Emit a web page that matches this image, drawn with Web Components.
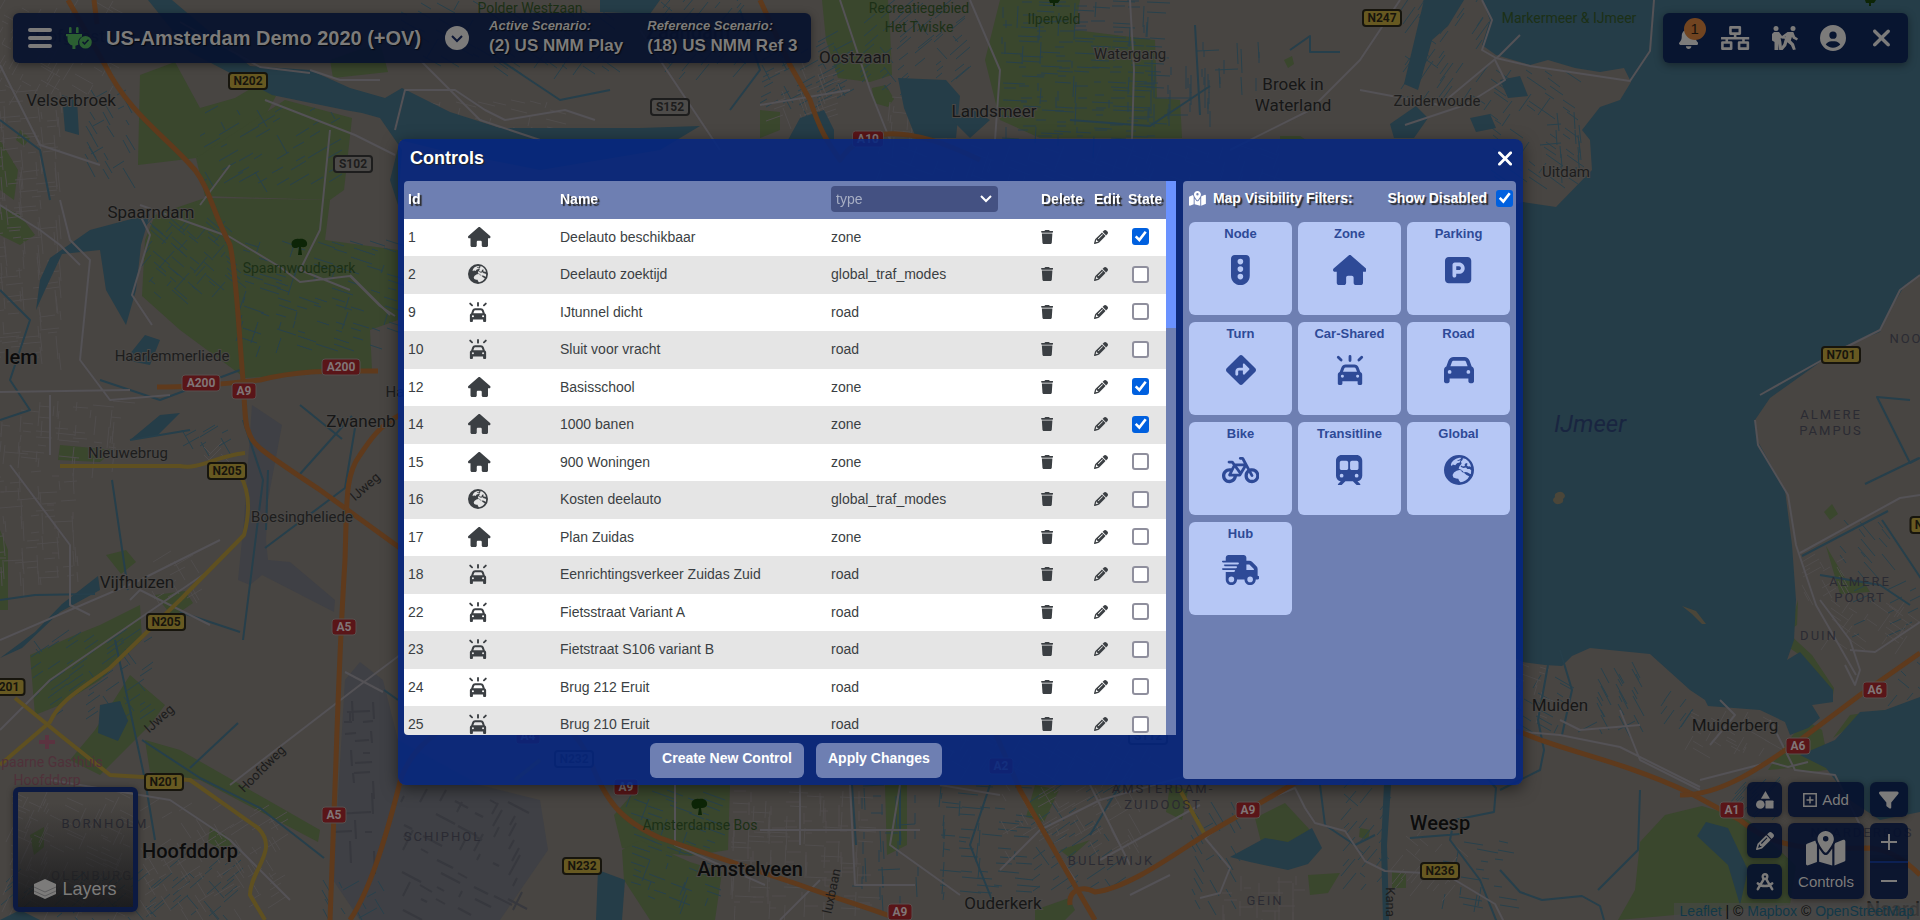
<!DOCTYPE html>
<html lang="en">
<head>
<meta charset="utf-8">
<title>Controls</title>
<style>
html, body {
    margin: 0;
    height: 100%;
    overflow: hidden;
    background: #484542;
    font-family: "Liberation Sans", Arial, sans-serif;
    font-size: 14px;
    --chrome: rgba(5, 17, 46, 0.9);
    --chrome-ink: #7c7b7a;
    --modal: rgba(4, 37, 128, 0.88);
    --panel: #6e7fb2;
    --ink: #3b3f43;
}
</style>
</head>
<body>
<map-app></map-app>

<script>
const ICONS = {
    house: ['0 0 576 512', '<path d="M575.8 255.5c0 18-15 32.1-32 32.1h-32l.7 160.2c0 2.7-.2 5.4-.5 8.1V472c0 22.1-17.9 40-40 40H392c-22.1 0-40-17.9-40-40V384c0-17.7-14.3-32-32-32H256c-17.7 0-32 14.3-32 32v88c0 22.1-17.9 40-40 40H104c-22.1 0-40-17.9-40-40V287.6H32c-18 0-32-14-32-32.1c0-9 3-17 10-24L266.4 8c7-7 15-8 22-8s15 2 21 7L564.8 231.5c8 7 12 15 11 24z"/>'],
    xmark: ['32 86 320 340', '<path d="M342.6 150.6c12.5-12.5 12.5-32.8 0-45.3s-32.8-12.5-45.3 0L192 210.7 86.6 105.4c-12.5-12.5-32.8-12.5-45.3 0s-12.5 32.8 0 45.3L146.7 256 41.4 361.4c-12.5 12.5-12.5 32.8 0 45.3s32.8 12.5 45.3 0L192 301.3 297.4 406.6c12.5 12.5 32.8 12.5 45.3 0s12.5-32.8 0-45.3L237.3 256 342.6 150.6z"/>'],
    bell: ['0 0 448 512', '<path d="M224 0c-17.7 0-32 14.3-32 32V51.2C119 66 64 130.6 64 208v18.8c0 47-17.3 92.4-48.5 127.6l-7.4 8.3c-8.4 9.4-10.4 22.9-5.3 34.4S19.4 416 32 416H416c12.6 0 24-7.4 29.2-18.9s3.1-25-5.3-34.4l-7.4-8.3C401.3 319.2 384 273.9 384 226.8V208c0-77.4-55-142-128-156.8V32c0-17.7-14.3-32-32-32zm45.3 493.3c12-12 18.7-28.3 18.7-45.3H160c0 17 6.7 33.3 18.7 45.3s28.3 18.7 45.3 18.7s33.3-6.7 45.3-18.7z"/>'],
    user: ['0 0 512 512', '<path d="M399 384.2C376.9 345.8 335.4 320 288 320H224c-47.4 0-88.9 25.8-111 64.2c35.2 39.2 86.2 63.8 143 63.8s107.8-24.7 143-63.8zM0 256a256 256 0 1 1 512 0A256 256 0 1 1 0 256zm256 16a72 72 0 1 0 0-144 72 72 0 1 0 0 144z"/>'],
    filter: ['0 20 512 470', '<path d="M3.9 54.9C10.5 40.9 24.5 32 40 32H472c15.5 0 29.5 8.9 36.1 22.9s4.6 30.5-5.2 42.5L320 320.9V448c0 12.1-6.8 23.2-17.7 28.6s-23.8 4.3-33.5-3l-64-48c-8.1-6-12.8-15.5-12.8-25.6V320.9L9 97.3C-.7 85.4-2.8 68.8 3.9 54.9z"/>'],
    car: ['0 0 512 512', '<path d="M135.2 117.4L109.1 192H402.9l-26.1-74.6C372.3 104.6 360.2 96 346.6 96H165.4c-13.6 0-25.7 8.6-30.2 21.4zM39.6 196.8L74.8 96.3C88.3 57.8 124.6 32 165.4 32H346.6c40.8 0 77.1 25.8 90.6 64.3l35.2 100.5c23.2 9.6 39.6 32.5 39.6 59.2V448c0 17.7-14.3 32-32 32H448c-17.7 0-32-14.3-32-32V400H96v48c0 17.7-14.3 32-32 32H32c-17.7 0-32-14.3-32-32V256c0-26.7 16.4-49.6 39.6-59.2zM128 288a32 32 0 1 0 -64 0 32 32 0 1 0 64 0zm288 32a32 32 0 1 0 0-64 32 32 0 1 0 0 64z"/>'],
    parking: ['0 0 448 512', '<path d="M64 32C28.7 32 0 60.7 0 96V416c0 35.3 28.7 64 64 64H384c35.3 0 64-28.7 64-64V96c0-35.3-28.7-64-64-64H64zM192 256h48c17.7 0 32-14.3 32-32s-14.3-32-32-32H192v64zm48 64H192v32c0 17.7-14.3 32-32 32s-32-14.3-32-32V168c0-22.1 17.9-40 40-40h72c53 0 96 43 96 96s-43 96-96 96z"/>'],
    turn: ['0 0 512 512', '<path d="M227.7 11.7c15.6-15.6 40.9-15.6 56.6 0l216 216c15.6 15.6 15.6 40.9 0 56.6l-216 216c-15.6 15.6-40.9 15.6-56.6 0l-216-216c-15.6-15.6-15.6-40.9 0-56.6l216-216zm87.6 137c-4.6-4.6-11.5-5.9-17.4-3.5s-9.9 8.3-9.9 14.8v56H224c-35.3 0-64 28.7-64 64v48c0 13.3 10.7 24 24 24s24-10.7 24-24V280c0-8.8 7.2-16 16-16h64v56c0 6.5 3.9 12.3 9.9 14.8s12.9 1.1 17.4-3.5l80-80c6.2-6.2 6.2-16.4 0-22.6l-80-80z"/>'],
    bike: ['0 0 640 512', '<path d="M312 32c-13.3 0-24 10.7-24 24s10.7 24 24 24h25.7l34.6 64H222.9l-27.4-38C191 99.7 183.7 96 176 96H120c-13.3 0-24 10.7-24 24s10.7 24 24 24h43.7l22.1 30.7-26.6 53.1c-10-2.5-20.5-3.8-31.2-3.8C57.3 224 0 281.3 0 352s57.3 128 128 128c65.3 0 119.1-48.9 127-112h49c8.5 0 16.3-4.5 20.7-11.8l84.8-143.5 21.7 40.1C402.4 276.3 384 312 384 352c0 70.7 57.3 128 128 128s128-57.3 128-128s-57.3-128-128-128c-13.5 0-26.5 2.1-38.7 6L375.4 48.8C369.8 38.4 359 32 347.2 32H312zM458.6 303.7l32.3 59.7c6.3 11.7 20.9 16 32.5 9.7s16-20.9 9.7-32.5l-32.3-59.7c3.6-.6 7.4-.9 11.2-.9c39.8 0 72 32.2 72 72s-32.2 72-72 72s-72-32.2-72-72c0-18.6 7-35.5 18.6-48.3zM133.2 368h65c-7.3 32.1-36 56-70.2 56c-39.8 0-72-32.2-72-72s32.2-72 72-72c1.7 0 3.4 .1 5.1 .2l-24.2 48.5c-9 18.1 4.1 39.4 24.3 39.4zm33.7-48l50.7-101.3 72.9 101.2-.1 .1H166.8zm90.6-128H365.9L317 274.8 257.4 192z"/>'],
    train: ['0 0 448 512', '<path fill-rule="evenodd" d="M96 0C43 0 0 43 0 96V352c0 48 35.2 87.7 81.1 94.9l-46 46C28.1 499.9 33.1 512 43 512H82.7c8.5 0 16.6-3.4 22.6-9.4L160 448H288l54.6 54.6c6 6 14.1 9.4 22.6 9.4H405c10 0 15-12.1 7.9-19.1l-46-46c46-7.1 81.1-46.9 81.1-94.9V96c0-53-43-96-96-96H96zM64 128c0-17.7 14.3-32 32-32h80c17.7 0 32 14.3 32 32v96c0 17.7-14.3 32-32 32H96c-17.7 0-32-14.3-32-32V128zM272 96h80c17.7 0 32 14.3 32 32v96c0 17.7-14.3 32-32 32H272c-17.7 0-32-14.3-32-32V128c0-17.7 14.3-32 32-32zM64 352a32 32 0 1 1 64 0 32 32 0 1 1 -64 0zm288-32a32 32 0 1 1 0 64 32 32 0 1 1 0-64z"/>'],
    truck: ['0 0 640 512', '<path d="M112 0C85.5 0 64 21.5 64 48V96H16c-8.8 0-16 7.2-16 16s7.2 16 16 16H272c8.8 0 16 7.2 16 16s-7.2 16-16 16H48c-8.8 0-16 7.2-16 16s7.2 16 16 16H240c8.8 0 16 7.2 16 16s-7.2 16-16 16H16c-8.8 0-16 7.2-16 16s7.2 16 16 16H208c8.8 0 16 7.2 16 16s-7.2 16-16 16H64V416c0 53 43 96 96 96s96-43 96-96H384c0 53 43 96 96 96s96-43 96-96h32c17.7 0 32-14.3 32-32s-14.3-32-32-32V237.3c0-17-6.7-33.3-18.7-45.3L512 114.7c-12-12-28.3-18.7-45.3-18.7H416V48c0-26.5-21.5-48-48-48H112zM544 237.3V256H416V160h50.7L544 237.3zM160 368a48 48 0 1 1 0 96 48 48 0 1 1 0-96zm272 48a48 48 0 1 1 96 0 48 48 0 1 1 -96 0z"/>'],
    light: ['0 0 320 512', '<path fill-rule="evenodd" d="M64 0C28.7 0 0 28.7 0 64V352c0 88.4 71.6 160 160 160s160-71.6 160-160V64c0-35.3-28.7-64-64-64H64zM112 112a48 48 0 1 1 96 0 48 48 0 1 1 -96 0zM112 240a48 48 0 1 1 96 0 48 48 0 1 1 -96 0zM112 368a48 48 0 1 1 96 0 48 48 0 1 1 -96 0z"/>'],
    globe: ['0 0 512 512', '<path fill-rule="evenodd" d="M256 0a256 256 0 1 1 0 512A256 256 0 1 1 256 0zM130 130L160 92 205 66 258 48 298 48 276 72 226 92 236 104 284 90 268 126 222 140 192 176 150 162 134 186 116 170zM322 54L372 70 420 112 448 158 462 206 434 190 410 196 388 176 404 150 378 138 352 158 356 186 322 196 300 178 282 200 330 222 376 214 398 238 440 240 464 262 460 318 448 326 404 300 372 292 336 298 318 270 262 256 216 268 170 298 146 340 160 382 208 402 244 404 258 440 282 464 324 456 366 436 404 404 430 364 384 342 350 310 300 284 304 256 250 234 262 198 300 150 290 112 316 84z"/>'],
    map: ['0 0 576 512', '<path d="M408 120c0 54.6-73.1 151.9-105.2 192c-7.7 9.6-22 9.6-29.6 0C241.1 271.9 168 174.6 168 120C168 53.7 221.7 0 288 0s120 53.7 120 120zm8 80.4c3.5-6.9 6.7-13.8 9.6-20.6c.5-1.2 1-2.5 1.5-3.7l116-46.4C558.9 123.4 576 135 576 152V422.8c0 9.8-6 18.6-15.1 22.3L416 503V200.4zM137.6 138.3c2.4 14.1 7.2 28.3 12.8 41.5c2.9 6.8 6.1 13.7 9.6 20.6V451.8L32.9 502.7C17.1 509 0 497.4 0 480.4V209.6c0-9.8 6-18.6 15.1-22.3l122.6-49zM327.8 332c13.9-17.4 35.7-45.7 56.2-77V504.3L192 449.4V255c20.5 31.3 42.3 59.6 56.2 77c20.5 25.6 59.1 25.6 79.6 0zM288 152a40 40 0 1 0 0-80 40 40 0 1 0 0 80z"/>'],
    trash: ['0 0 448 512', '<path d="M135.2 17.7L128 32H32C14.3 32 0 46.3 0 64S14.3 96 32 96H416c17.7 0 32-14.3 32-32s-14.3-32-32-32H320l-7.2-14.3C307.4 6.8 296.3 0 284.2 0H163.8c-12.1 0-23.2 6.8-28.6 17.7zM416 128H32L53.2 467c1.6 25.3 22.6 45 47.9 45H346.9c25.3 0 46.3-19.7 47.9-45L416 128z"/>'],
    pencil: ['0 0 512 512', '<path d="M410.3 231l11.3-11.3-33.9-33.9-62.1-62.1L291.7 89.8l-11.3 11.3-22.6 22.6L58.6 322.9c-10.4 10.4-18 23.3-22.2 37.4L1 480.7c-2.5 8.4-.2 17.5 6.1 23.7s15.3 8.5 23.7 6.1l120.3-35.4c14.1-4.2 27-11.8 37.4-22.2L387.7 253.7 410.3 231zM160 399.4l-9.1 22.7c-4 3.1-8.5 5.4-13.3 6.9L59.4 452l23-78.1c1.4-4.9 3.8-9.4 6.9-13.3l22.7-9.1v32c0 8.8 7.2 16 16 16h32zM362.7 18.7L348.3 33.2 325.7 55.8 314.3 67.1l33.9 33.9 62.1 62.1 33.9 33.9 11.3-11.3 22.6-22.6 14.5-14.5c25-25 25-65.5 0-90.5L453.3 18.7c-25-25-65.5-25-90.5 0zm-47.4 168l-144 144c-6.2 6.2-16.4 6.2-22.6 0s-6.2-16.4 0-22.6l144-144c6.2-6.2 16.4-6.2 22.6 0s6.2 16.4 0 22.6z"/>'],
    bars: ['0 0 24 20', '<path d="M2 0h20a2 2 0 0 1 0 4H2a2 2 0 0 1 0-4zM2 8h20a2 2 0 0 1 0 4H2a2 2 0 0 1 0-4zM2 16h20a2 2 0 0 1 0 4H2a2 2 0 0 1 0-4z"/>'],
    plug: ['0 0 26 22', '<path d="M3 1.3a1.3 1.3 0 0 1 2.6 0V6H3zM10 1.3a1.3 1.3 0 0 1 2.6 0V6H10zM0 7h16v2.500a7.500 7.500 0 0 0-3.700 8.300l-2.900 1V22H6.400v-3.500C3.500 17.800 1.500 15.500 1.500 12V9.300H0z"/><path fill-rule="evenodd" d="M19.500 9a6.300 6.300 0 1 1 0 12.600 6.300 6.300 0 0 1 0-12.600zM23 13.200l-1-1-3.400 3.600-1.600-1.500-1 1.100 2.600 2.500z"/>'],
    chevronCircle: ['0 0 24 24', '<circle cx="12" cy="12" r="12"/><path d="M7 10l5 5 5-5" fill="none" stroke="#0d1735" stroke-width="2"/>'],
    chevron: ['0 0 12 8', '<path d="M1 1l5 5 5-5" fill="none" stroke="currentColor" stroke-width="2"/>'],
    sitemap: ['0 0 29 23', '<path fill="none" stroke="currentColor" stroke-width="2.500" stroke-linejoin="round" d="M10 1.300h9v6h-9zM2.300 15.800h8.400v5.900H2.300zM18.300 15.800h8.400v5.900h-8.400zM14.500 7.500v4.500M1 11.800h27M6.500 12v4M22.500 12v4"/>'],
    people: ['0 0 26 24', '<circle cx="4" cy="2.500" r="2.500"/><circle cx="21" cy="2.500" r="2.500"/><path d="M2 6h5l3.200 4.200 3.600.4v2.400L8.600 12.200 9.400 16l.8 8H7.200l-.8-6.500V24H2.500V16L0 14.500V8z"/><path d="M15.500 6h5.800l1.800 4.500 2.900 2-1.200 2-4-2.100-.8-1.600-1.200 3.600 3.200 3.400 1.800 5.800-2.800.400-2.100-4.700-3.600-3-1 3.500-4 4.600-2.200-1.600 3.300-4.700 2.300-8-3.200 2.300-1.500-1.600z"/>'],
    shapes: ['0 0 20 20', '<path d="M10.500 0l5 8.500h-10z"/><circle cx="4.800" cy="15" r="4.800"/><rect x="10.500" y="10.500" width="9" height="9" rx="1"/>'],
    compass: ['0 0 20 20', '<path fill="none" stroke="currentColor" stroke-width="2.800" stroke-linecap="round" d="M8.800 6.500L2 18M11.200 6.500L18 18M2 11.500c4 4 12 4 16 0"/><circle cx="10" cy="4" r="2.600" fill="none" stroke="currentColor" stroke-width="2.600"/>'],
    plusSquare: ['0 0 14 14', '<path fill="none" stroke="currentColor" stroke-width="1.500" d="M.8.8h12.400v12.400H.8zM7 3.500v7M3.500 7h7"/>'],
    plus: ['0 0 16 16', '<path d="M7 0h2v7h7v2H9v7H7V9H0V7h7z"/>'],
    minus: ['0 0 16 16', '<path d="M0 7h16v2H0z"/>'],
    layers: ['0 0 22 20', '<path d="M11 0l11 5v10l-11 5L0 15V5z"/><path fill="none" stroke="#24262a" stroke-opacity=".5" stroke-width=".7" d="M0 8l11 5 11-5M0 12l11 5 11-5"/>']
};
// the alerted car is the plain car made smaller, with three rays above it
ICONS.carOn = ['0 0 512 512', `<g transform="translate(48 138) scale(.8125 .78)">${ICONS.car[1]}</g>
    <path fill="none" stroke="currentColor" stroke-width="48" stroke-linecap="round" d="M256 24v70M56 40l48 46M456 40l-48 46"/>`];

class AppIcon extends HTMLElement {
    constructor() {
        super();
        this.attachShadow({mode: 'open'});
    }

    connectedCallback() {
        const [box, body] = ICONS[this.getAttribute('name')];
        this.shadowRoot.innerHTML = `
<style>
:host {
    display: inline-flex;
    flex: none;
    height: 20px;
}

svg {
    display: block;
    height: 100%;
    fill: currentColor;
}
</style>
<svg viewBox="${box}" aria-hidden="true">${body}</svg>`;
    }
}

// ---- basemap ----

const GREENS = [
    'M140 75L175 62 200 108 235 98 262 82 276 96 262 122 196 158 138 165z',
    'M196 158L285 100 352 118 344 190 330 200 205 196z',
    'M155 215L205 198 330 200 325 240 398 250 398 320 370 330 372 370 245 378 180 330 142 296 145 240z',
    'M0 205L20 215 35 235 20 245 0 235zM60 445L115 450 100 462 58 460zM0 530l8 20v60H0z',
    'M0 140l18 30-4 30-14-10zM20 130l10 8-6 8-8-6z',
    'M30 655L75 635 100 625 140 605 142 640 100 680 60 705 35 715z',
    'M130 675L165 705 150 725 100 775 70 760 95 730z',
    'M145 740L180 750 250 790 320 830 318 842 200 780 150 772z',
    'M106 555l20-5 10 12-15 12zM155 595l30-4 8 12-20 14z',
    'M210 828l14 6 8 10-10 6-14-8z',
    'M30 835l14-8 0 20-10 8z',
    'M822 0H888L890 30 892 75 870 82 838 78 826 40z',
    'M1000 0H1080L1075 30 1155 40 1157 98 1180 100 1182 138 1040 138 1000 120 985 60z',
    'M872 88l14-3 8 14-6 8-14-4zM760 110l20 2v18l-20 8zM1284 60l8-4 2 8-6 4zM1280 136h20l6 4h-26z',
    'M330 60l50-18 8 30-55 6z',
    'M640 785H730L728 850 690 856 622 848 614 815z',
    'M622 850L640 840 690 862 722 872 715 920H650L624 880z',
    'M885 785h22v60l-20 10zM1035 785l24 5-15 32-18-5zM1170 785l18 5-6 30-16-8z',
    'M1255 818L1285 803 1310 830 1290 842 1262 846z',
    'M1308 875l32-2-12 20-18 2zM1392 872l14 2v14h-14zM1360 828l10 2-2 10-9-3z',
    'M1635 890L1640 842 1665 815 1702 806 1748 820 1796 866 1790 905 1618 920z',
    'M1768 770L1785 745 1805 720 1822 730 1828 760 1840 768 1812 772 1790 768z',
    'M1798 600L1797 625 1787 632 1812 655 1834 688 1832 702 1820 700 1800 655 1785 645z',
    'M1826 546l20 34 18 2 6 10-30 2zM1824 512l8-8 6 10-8 6z',
    'M1833 738L1850 715 1885 710 1860 720z',
    'M1035 910l34-12 6 12-10 10h-30zM1060 850l30-10-20 18z'
];

const WATERS = [
    // the lake and its coast
    'M1482 0L1490 20 1482 45 1496 55 1530 65 1548 60 1575 68 1600 72 1624 68 1631 82 1620 100 1600 107 1582 130 1590 140 1592 170 1556 207 1523 202 1480 215 1440 300 1400 380 1300 480 1260 560 1400 600 1523 662 1545 665 1562 666 1572 656 1590 648 1650 654 1690 690 1705 700 1708 706 1760 710 1785 722 1790 735 1808 728 1820 718 1812 705 1833 702 1833 690 1800 652 1787 660 1794 640 1796 600 1792 545 1785 490 1757 440 1755 420 1770 398 1840 348 1880 332 1893 305 1905 285 1920 275V0z',
    'M1920 697L1885 710 1860 712 1835 740 1800 755 1826 768 1850 800 1880 820 1920 812z',
    'M148 0H172L250 66 310 70 350 88 385 98 402 88 450 112 500 128 540 128 640 128 700 126 660 150 540 170 440 150 400 140 390 180 398 205 402 150 380 118 362 113 345 110 272 95 190 52z',
    'M50 258L90 230 150 214 141 245 136 290 126 325 106 290 100 250 62 254 45 290 36 310 40 280z',
    'M0 658L35 632 62 604 98 576 100 590 60 612 22 648z',
    'M125 360l20-25 15 5-10 25zM130 440l30-25 20-2-22 22z',
    'M62 95l15 5 2 35-14-4zM100 705l20-4 8 20-10 20-20-8z',
    'M598 870L625 880 622 920H596z',
    'M0 920l20-10 20 10z',
    'M1230 857L1265 838 1288 842 1312 828 1322 848 1308 864 1288 870 1250 862z',
    'M1697 836L1706 822 1728 828 1748 870 1740 905 1728 865z',
    'M1384 785h7l-4 60 2 75h-6l-2-75z',
    'M898 78l48 2 14 16-4 42h-40l-12-30z',
    'M800 118l24-8 10 20 0 10h-46zM952 120l18-12 20 12-20 18z',
    'M1500 80l20-4 8 20-20 2zM1424 0h40l-16 26-16 14-14 50-14-6zM600 0h60l-10 14-50-2z',
    'M1390 124l26-18 12 12-14 20h-20zM1470 118l20-4 6 14-20 4z'
];

const STREAMS = [
    'M1500 790l40-20 4-20-6-30 10-55M1500 870l20 22 22 8 40-4 18 10 4 14',
    'M1560 650l12 40-10 45M1640 790l-2 60-40 40',
    'M300 405l42 34M300 474l52-58M180 612l60 20M243 420l20 60-20 160M268 470l-2 60M128 590l-16-110M115 640l30 140 10 60M190 768l48-45',
    'M265 548l80-60 10-60M0 600l35-5 60-1M384 690l14 10M142 740l58 38 60 30 64 50',
    'M1320 785l5 40 30 20 20-10M1480 770l16 18-2 24-40 8-4 20 30 40 20 50M1410 838l50-4',
    'M1910 400l-33-3 33 66 20-10M1865 484l54-26M1882 520l40 60M1802 556l86-45M1820 575l60 10 30 20',
    'M740 10l20 60-30 40M500 60l60 40 50-10M1290 50l20-14 0 16 30 0M1195 25l5 90M1070 120l80 6 60-40',
    'M900 785v60M852 785l4 60M990 785l-20 60 24 60M1120 785l-30 50',
    'M0 120l40 30 10 50M0 290l30 30-20 60 20 30-30 10M130 440l60-10M100 380l60 20 80-30'
];

const WHITE_ROADS = [
    'M0 205l40 25 20 15 20 20M60 200l10 40 20 20-10 100 30 40 60-5M0 392l130-2M50 395v60M0 65l40 80 60 20',
    'M140 215l10 20-18 60 20 30M140 205l90 32 50 30 20 15 50-6 30 30 15 10M330 130l-10 100-20 40 50 20M230 165l-30 40',
    'M350 275l40 40M10 465l60 80v60l20 10M130 600l10-10 30 15 40 20M0 640l140-60 80-40',
    'M0 730l50-50 80-55 80-55M230 785l130-100 40-30M345 672l38 20M50 780l120 20 60 40 60 60',
    'M180 22l80 45 50 6M265 100l90 35 40 20M310 70l30 10 40 0M395 130l10-40 50 0 30 20 20 10 60-10 30 10M420 60l60 60 60 20M640 30l40 60 40 60',
    'M675 785v60l90 40M800 785v60M850 785l5 100 60 0M900 785l-10 60 70 50M760 830h160M820 880l-40 40',
    'M940 785l60 10M1000 870l40-40 60-30 90-25M1035 820l40 60M1090 785l40 80M1100 860l100-55M1130 895l40-20',
    'M1205 838l40-30 50-20 10 20 10 15 30 8 20 30 20 10 60 3 50 30 15 30M1205 838l25 30-10 25-20 5',
    'M1500 730l60 5 60 12 80 40M1560 720l20 10 60-5M1620 710l20 50 60 30M1720 700l15 15-25 30M1700 780l70-18 18 5 20-5',
    'M1760 395l80-45 40-20 20-40 20-15M1755 420l3 25 30 50 8 50 20 60 40 70M1800 553l100-55 20-3',
    'M1820 600l30 40 10 30-5 15-10-20M1850 650l25 2 45-30M1770 720l25 50 40 5 30 60',
    'M970 0l30 70-5 70M840 0l30 90 20 50M1130 0l4 70-2 70M1400 0l-40 60-30 30-20 20-80 40M1360 90l80 15 60-50 20-20',
    'M1482 0l10 20-10 30 14 8 34 8 100 15 20-30 4-51M1495 60l10 20-40 25-60 20M760 105l90-15'
];

const MOTORWAYS = [
    'M68 0L105 65C130 115 165 135 195 170 210 190 212 210 230 245 236 270 238 320 243 380 245 410 245 425 248 430 252 445 260 450 320 490L400 548',
    'M94 0L97 24',
    'M157 387C180 387 205 386 260 380 300 370 330 371 378 371',
    'M400 415C380 425 370 440 360 455 345 475 347 500 345 560 340 640 338 700 336 760L330 920',
    'M350 920C370 890 385 840 398 790 405 755 430 730 480 712 560 710 575 730 590 760 605 800 620 820 660 838L800 885C840 900 870 908 900 920',
    'M955 640L1020 790 1060 860 1095 920M1070 905C1068 890 1082 885 1095 892 1130 888 1180 850 1205 835L1300 780 1400 700 1523 733C1560 750 1620 760 1690 793',
    'M1690 793L1740 820C1780 855 1830 848 1870 848 1890 850 1905 860 1920 875',
    'M1680 795C1720 796 1760 768 1800 740L1860 695 1920 653',
    'M760 0L790 65 810 100C820 130 826 140 840 160 860 130 900 120 980 160'
];

const YELLOW_ROADS = [
    'M60 466H180C200 470 215 456 245 453M240 475C252 495 248 520 244 535L180 600 110 668C80 690 60 700 50 722L0 765',
    'M15 698L60 735 110 775 190 780 258 828C280 850 250 870 250 895L265 920',
    'M1180 790L1205 835M540 760l-25 20'
];

// x, baseline, text, kind
const LABELS = [
    [530, 13, 'Polder Westzaan', 'park'], [71, 106, 'Velserbroek', 'town'], [688, 39, 'Zaandam', 'town big faint'], [70, 42, 'Hofgeest', 'town faint'],
    [919, 13, 'Recreatiegebied', 'park'], [919, 32, 'Het Twiske', 'park'], [1054, 24, 'Ilperveld', 'park'],
    [855, 63, 'Oostzaan', 'town'], [1130, 59, 'Watergang', 'town small'], [994, 117, 'Landsmeer', 'town'],
    [1293, 90, 'Broek in', 'town'], [1293, 111, 'Waterland', 'town'], [1437, 106, 'Zuiderwoude', 'town small'],
    [1569, 23, 'Markermeer & IJmeer', 'park'], [1566, 177, 'Uitdam', 'town small'],
    [151, 218, 'Spaarndam', 'town'], [299, 273, 'Spaarnwoudepark', 'park'], [21, 364, 'lem', 'town big'],
    [172, 361, 'Haarlemmerliede', 'town small'], [361, 427, 'Zwanenb', 'town'], [395, 397, 'Ha', 'town small'],
    [128, 458, 'Nieuwebrug', 'town small'], [302, 522, 'Boesingheliede', 'town small'], [137, 588, 'Vijfhuizen', 'town'],
    [52, 767, 'paarne Gasthuis', 'care'], [47, 785, 'Hoofddorp', 'care'], [105, 828, 'BORNHOLM', 'area'], [92, 880, 'OLENBURG', 'area faint'],
    [190, 858, 'Hoofddorp', 'town big'], [443, 841, 'SCHIPHOL', 'area'], [700, 830, 'Amsterdamse Bos', 'park'],
    [750, 876, 'Amstelveen', 'town big'], [1003, 909, 'Ouderkerk', 'town'],
    [1163, 793, 'AMSTERDAM-', 'area'], [1163, 809, 'ZUIDOOST', 'area'], [1111, 865, 'BULLEWIJK', 'area'], [1265, 905, 'GEIN', 'area'],
    [1440, 830, 'Weesp', 'town big'], [1560, 711, 'Muiden', 'town'], [1735, 731, 'Muiderberg', 'town'],
    [1819, 640, 'DUIN', 'area'], [1831, 419, 'ALMERE', 'area'], [1831, 435, 'PAMPUS', 'area'],
    [1860, 586, 'ALMERE', 'area'], [1860, 602, 'POORT', 'area'], [1906, 343, 'NOO', 'area'],
    [1590, 432, 'IJmeer', 'lake'], [1862, 837, 'NAARDERBOS', 'area'], [1893, 916, 'Naard', 'town big faint']
];

const TURNED = [
    [368, 490, -42, 'IJweg'], [162, 722, -42, 'IJweg'], [265, 772, -45, 'Hoofdweg'], [836, 892, -78, 'luxbaan'], [1386, 902, 90, 'Kana']
];

const SHIELDS = [
    [248, 81, 'N202', 'n'], [670, 107, 'S152', 's'], [353, 164, 'S102', 's'], [1382, 18, 'N247', 'n'], [868, 139, 'A10', 'a'],
    [201, 383, 'A200', 'a'], [341, 367, 'A200', 'a'], [244, 391, 'A9', 'a'], [227, 471, 'N205', 'n'], [166, 622, 'N205', 'n'],
    [344, 627, 'A5', 'a'], [9, 687, '201', 'n'], [164, 782, 'N201', 'n'], [334, 815, 'A5', 'a'], [582, 866, 'N232', 'n'],
    [574, 759, 'N232', 's'], [626, 787, 'A9', 'a'], [900, 912, 'A9', 'a'], [1248, 810, 'A9', 'a'], [1001, 766, 'A2', 'a'],
    [1148, 736, 'S112', 's'], [1440, 871, 'N236', 'n'], [1875, 690, 'A6', 'a'], [1798, 746, 'A6', 'a'], [1732, 810, 'A1', 'a'],
    [1841, 355, 'N701', 'n'], [1919, 525, 'N', 'n'], [528, 736, 'A4', 'a']
];

// x, y, width, height, angle, step, kind: fields of ditches and street grids
const FIELDS = [
    [1000, 0, 150, 138, 2, 5, 'ditch'], [1150, 60, 60, 60, 90, 6, 'ditch'], [860, 10, 100, 90, -40, 6, 'ditch'], [760, 40, 90, 70, -28, 5, 'ditch'],
    [1200, 40, 60, 40, 88, 9, 'ditch'], [1400, 0, 80, 120, -55, 8, 'ditch'], [1490, 70, 90, 110, 35, 7, 'ditch'], [1556, 110, 24, 60, 85, 6, 'ditch'],
    [150, 215, 80, 80, 40, 5, 'ditch'], [240, 240, 150, 110, 18, 8, 'ditch'], [200, 110, 130, 80, -30, 12, 'ditch'], [30, 640, 110, 80, -35, 7, 'ditch'],
    [85, 90, 50, 80, 60, 7, 'ditch'], [0, 880, 150, 40, -40, 6, 'ditch'], [150, 865, 90, 50, -40, 7, 'ditch'], [180, 430, 40, 20, -30, 5, 'ditch'],
    [630, 790, 90, 110, 20, 7, 'ditch'], [940, 785, 80, 110, 5, 7, 'ditch'], [860, 785, 70, 110, 88, 9, 'ditch'], [1030, 790, 90, 110, -35, 11, 'ditch'],
    [1190, 800, 50, 100, 60, 11, 'ditch'], [1340, 785, 40, 110, -50, 8, 'ditch'], [1440, 840, 70, 70, 10, 9, 'ditch'], [1596, 660, 50, 70, 62, 6, 'ditch'],
    [1660, 700, 30, 30, -55, 4, 'ditch'], [1730, 790, 50, 30, -48, 4, 'ditch'], [1850, 590, 60, 50, -25, 11, 'ditch'], [1840, 520, 50, 50, 50, 8, 'ditch'],
    [490, 10, 110, 60, 35, 6, 'ditch'], [660, 0, 90, 80, -50, 7, 'ditch'], [1500, 675, 70, 50, 30, 8, 'ditch'], [1895, 660, 20, 40, 40, 8, 'ditch'],
    [400, 0, 90, 60, 30, 9, 'ditch'], [320, 880, 60, 30, 60, 9, 'ditch'],
    [0, 90, 60, 270, 84, 5, 'street'], [0, 400, 110, 60, 5, 5, 'street'], [0, 470, 90, 110, 86, 5, 'street'], [10, 790, 110, 120, 25, 6, 'street'],
    [140, 810, 130, 100, -32, 6, 'street'], [0, 0, 110, 90, 30, 6, 'street'], [730, 790, 140, 120, 2, 5, 'street'], [1000, 785, 140, 70, -30, 7, 'street'],
    [1220, 875, 90, 45, 1, 6, 'street'], [1400, 830, 70, 60, 40, 6, 'street'], [1500, 660, 40, 60, 20, 6, 'street'], [1690, 710, 80, 40, 30, 6, 'street'],
    [1830, 600, 90, 40, 35, 6, 'street'], [1800, 560, 50, 40, -30, 5, 'street'], [890, 90, 50, 50, 5, 5, 'street'], [780, 60, 70, 60, 70, 6, 'street'],
    [350, 700, 35, 160, 87, 10, 'apron'], [400, 800, 110, 110, -62, 12, 'apron'], [930, 600, 220, 170, 30, 7, 'street'], [880, 145, 400, 36, 20, 7, 'street'],
    [400, 100, 150, 40, 14, 8, 'street'], [200, 440, 30, 20, 45, 6, 'street'], [150, 560, 50, 40, -30, 6, 'street']
];

class BasemapView extends HTMLElement {
    constructor() {
        super();
        this._seed = 7;
        const shadow = this.attachShadow({mode: 'open'});
        shadow.innerHTML = `
<style>
:host {
    display: block;
    position: absolute;
    inset: 0;
}

svg {
    display: block;
    width: 100%;
    height: 100%;
    background: #484542;
    font-family: Roboto, "Liberation Sans", sans-serif;
}

path { fill: none; stroke-linejoin: round; }
.green { fill: #3a472d; }
.water { fill: #253d48; }
.stream { stroke: #263f4b; stroke-width: 2; }
.ditch { stroke: #28414c; stroke-width: 1; }
.apron { stroke: #37383e; stroke-width: 2; }
.airport { fill: #3f4045; }
.road { stroke: #545256; stroke-width: 2; }
.street { stroke: #504d4d; stroke-width: 1; }
.motorway { stroke: #5f3a1c; stroke-width: 5; }
.yellow { stroke: #5f5020; stroke-width: 4; }
text { text-anchor: middle; }
.town { font-size: 17px; fill: #171717; stroke: #4a4846; stroke-width: 2; paint-order: stroke; }
.town.small { font-size: 15px; fill: #1d1d1d; }
.town.big { font-size: 20px; font-weight: 500; fill: #0c0c0c; }
.park { font-size: 14px; fill: #1c3016; }
.care { font-size: 14px; fill: #50313a; }
.area { font-size: 13px; fill: #2b2b33; letter-spacing: 2px; }
.faint { opacity: 0.6; }
.lake { font-size: 24px; font-style: italic; fill: #192540; }
.turned { font-size: 13px; fill: #1c1c1c; }
.shield text { font-size: 12px; font-weight: 700; }
.n rect { fill: #675921; stroke: #17150d; stroke-width: 2; }
.n text { fill: #17150d; }
.s rect { fill: #4d4b49; stroke: #1d1d1d; stroke-width: 2; }
.s text { fill: #1d1d1d; }
.a rect { fill: #5a1518; stroke: #57504e; }
.a text { fill: #807577; }
</style>
<svg viewBox="0 0 1920 920" preserveAspectRatio="xMidYMid slice">
    <path class="airport" d="M252 405L282 425 268 500 266 540 268 560 290 562 335 600 334 612 262 575 250 585 238 580 244 520z"/>
    <path class="airport" d="M345 680L360 662 383 680 398 740 480 785 540 800 548 850 500 920H360L333 880z"/>
    ${GREENS.map(d => `<path class="green" d="${d}"/>`).join('')}
    ${FIELDS.map(f => this._field(...f)).join('')}
    ${WATERS.map(d => `<path class="water" d="${d}"/>`).join('')}
    ${STREAMS.map(d => `<path class="stream" d="${d}"/>`).join('')}
    ${WHITE_ROADS.map(d => `<path class="road" d="${d}"/>`).join('')}
    ${YELLOW_ROADS.map(d => `<path class="yellow" d="${d}"/>`).join('')}
    ${MOTORWAYS.map(d => `<path class="motorway" d="${d}"/>`).join('')}
    <path d="M1555 497a5 4 0 1 1 8 2 5 4 0 1 1-8-2zM1682 606l14 5 10 13-4 0-10-10z" style="fill:#4b4639"/>
    <g fill="#0d2507">
        <path style="fill:inherit" d="M292 246c-2-5 3-8 7-7 5-1 9 2 8 6-1 3-5 2-6 2l1 8h-4l1-8c-2 1-6 2-7-1z"/>
        <path style="fill:inherit" d="M692 806c-2-5 3-8 7-7 5-1 9 2 8 6-1 3-5 3-6 3l1 7h-4l1-7c-2 1-6 2-7-2z"/>
        <path style="fill:inherit" d="M1049 0h11l-2 3h-3v3h-2V3h-3zM1865 0h11l-2 3h-3v3h-2V3h-3z"/>
    </g>
    <path d="M45 735h4v5h6v4h-6v5h-4v-5h-6v-4h6z" style="fill:#5b3340"/>
    ${SHIELDS.map(s => this._shield(...s)).join('')}
    ${LABELS.map(([x, y, t, k]) => `<text class="${k}" x="${x}" y="${y}">${t.replace('&', '&amp;')}</text>`).join('')}
    ${TURNED.map(([x, y, a, t]) => `<text class="turned" transform="translate(${x} ${y}) rotate(${a})">${t}</text>`).join('')}
</svg>`;
    }

    // small repeatable generator, so the map is the same on each load
    _random() {
        this._seed = (this._seed * 16807) % 2147483647;
        return this._seed / 2147483647;
    }

    _field(x, y, w, h, angle, step, kind) {
        const a = angle * Math.PI / 180;
        const across = kind == 'ditch' ? 0.2 : 0.5;
        let d = '';
        for (let py = y; py < y + h; py += step)
        {
            for (let px = x; px < x + w; px += 18)
            {
                if (this._random() < 0.3)
                {
                    continue;
                }
                const turn = this._random() < across ? a + Math.PI / 2 : a;
                const len = 6 + this._random() * 18;
                const sx = px + this._random() * 6;
                const sy = py + this._random() * 3;
                d += `M${sx.toFixed(0)} ${sy.toFixed(0)}l${(Math.cos(turn) * len).toFixed(0)} ${(Math.sin(turn) * len).toFixed(0)}`;
            }
        }
        return `<path class="${kind}" d="${d}"/>`;
    }

    _shield(x, y, text, kind) {
        const w = 10 + text.length * 7;
        return `<g class="shield ${kind}"><rect x="${x - w / 2}" y="${y - 8}" width="${w}" height="16" rx="3"/><text x="${x}" y="${y + 4}">${text}</text></g>`;
    }
}

// ---- chrome around the map ----

class ScenarioBar extends HTMLElement {
    constructor() {
        super();
        this.attachShadow({mode: 'open'}).innerHTML = `
<style>
:host {
    display: flex;
    align-items: center;
    box-sizing: border-box;
    height: 50px;
    padding: 0 14px 0 15px;
    border-radius: 6px;
    background: var(--chrome);
    color: var(--chrome-ink);
    box-shadow: 0 2px 8px rgba(0, 0, 0, 0.4);
    white-space: nowrap;
}

button {
    display: flex;
    padding: 0;
    border: 0;
    background: none;
    color: inherit;
}

.plug { height: 22px; margin: 0 14px; color: #2b5f32; }
.choose { margin: 0 20px 0 24px; }
.choose app-icon { height: 24px; }
h1 { margin: 0; padding-bottom: 1px; font-size: 20px; line-height: 24px; }
dl { margin: 0 24px 0 0; padding-bottom: 2px; font-weight: bold; }
dl:last-child { margin: 0; }
dt { font-size: 13px; line-height: 18px; font-style: italic; }
dd { margin: 0; font-size: 17px; line-height: 22px; }
h1, dl { text-shadow: 1px 1px 1px #05080f; }
</style>
<button aria-label="Menu"><app-icon name="bars"></app-icon></button>
<app-icon class="plug" name="plug"></app-icon>
<h1><slot></slot></h1>
<button class="choose" aria-label="Choose scenario"><app-icon name="chevronCircle"></app-icon></button>
<dl><dt>Active Scenario:</dt><dd><slot name="active"></slot></dd></dl>
<dl><dt>Reference Scenario:</dt><dd><slot name="reference"></slot></dd></dl>`;
    }
}

class UserBar extends HTMLElement {
    constructor() {
        super();
        this.attachShadow({mode: 'open'}).innerHTML = `
<style>
:host {
    display: flex;
    align-items: center;
    gap: 22px;
    box-sizing: border-box;
    height: 50px;
    padding: 0 18px 0 16px;
    border-radius: 6px;
    background: var(--chrome);
    color: var(--chrome-ink);
    box-shadow: 0 2px 8px rgba(0, 0, 0, 0.4);
}

button {
    display: flex;
    position: relative;
    padding: 0;
    border: 0;
    background: none;
    color: inherit;
    font: inherit;
}

button:last-child { margin-left: 5px; }
app-icon { height: 24px; }
.user { height: 26px; }
.close { height: 18px; }
.bell { height: 22px; }

.badge {
    position: absolute;
    left: 5px;
    top: -9px;
    width: 22px;
    border-radius: 50%;
    background: #714420;
    color: #17120c;
    font-size: 15px;
    line-height: 22px;
    text-align: center;
}
</style>
<button aria-label="Notifications"><app-icon class="bell" name="bell"></app-icon><span class="badge"><slot></slot></span></button>
<button aria-label="Network"><app-icon name="sitemap"></app-icon></button>
<button aria-label="Follow"><app-icon name="people"></app-icon></button>
<button aria-label="Account"><app-icon class="user" name="user"></app-icon></button>
<button aria-label="Close project"><app-icon class="close" name="xmark"></app-icon></button>`;
    }
}

class LayersButton extends HTMLElement {
    constructor() {
        super();
        this.attachShadow({mode: 'open'}).innerHTML = `
<style>
:host { display: block; }

button {
    display: flex;
    align-items: flex-end;
    justify-content: center;
    gap: 6px;
    width: 125px;
    height: 125px;
    padding: 0 0 8px;
    border: 5px solid #0c1a42;
    border-radius: 6px;
    background: linear-gradient(rgba(20, 21, 24, 0) 10%, rgba(20, 21, 24, 0.85));
    color: var(--chrome-ink);
    font: 18px/20px "Liberation Sans", Arial, sans-serif;
    box-shadow: 0 1px 6px rgba(0, 0, 0, 0.4);
}
</style>
<button><app-icon name="layers"></app-icon><slot></slot></button>`;
    }
}

class MapTools extends HTMLElement {
    constructor() {
        super();
        this.attachShadow({mode: 'open'}).innerHTML = `
<style>
:host {
    display: grid;
    grid-template-columns: 35px 76px 38px;
    grid-template-rows: repeat(3, 35px);
    gap: 6px;
}

button {
    display: flex;
    align-items: center;
    justify-content: center;
    gap: 5px;
    padding: 0;
    border: 0;
    border-radius: 6px;
    background: var(--chrome);
    color: var(--chrome-ink);
    font: 15px/20px "Liberation Sans", Arial, sans-serif;
    box-shadow: 0 1px 6px rgba(0, 0, 0, 0.4);
}

app-icon { height: 18px; }
.small { height: 14px; }

.controls {
    grid-area: 2 / 2 / 4 / 3;
    flex-direction: column;
    gap: 6px;
}

.controls app-icon { height: 35px; }

.zoom {
    grid-area: 2 / 3 / 4 / 4;
    display: grid;
    grid-template-rows: 1fr 1fr;
    border-radius: 6px;
    overflow: hidden;
}

.zoom button { border-radius: 0; }
.zoom button + button { border-top: 2px solid #0c2053; }
.zoom app-icon { height: 16px; }
</style>
<button aria-label="Shapes"><app-icon name="shapes"></app-icon></button>
<button><app-icon class="small" name="plusSquare"></app-icon>Add</button>
<button aria-label="Filter"><app-icon name="filter"></app-icon></button>
<button aria-label="Draw"><app-icon name="pencil"></app-icon></button>
<button class="controls"><app-icon name="map"></app-icon>Controls</button>
<div class="zoom">
    <button aria-label="Zoom in"><app-icon name="plus"></app-icon></button>
    <button aria-label="Zoom out"><app-icon name="minus"></app-icon></button>
</div>
<button aria-label="Measure"><app-icon name="compass"></app-icon></button>`;
    }
}

class MapAttribution extends HTMLElement {
    constructor() {
        super();
        this.attachShadow({mode: 'open'}).innerHTML = `
<style>
:host {
    display: block;
    padding: 0 6px;
    background: rgba(72, 72, 72, 0.6);
    color: #0e0e0e;
    line-height: 17px;
}

a { color: #123848; text-decoration: none; }
</style>
<a href="#leaflet">Leaflet</a> | © <a href="#mapbox">Mapbox</a> © <a href="#osm">OpenStreetMap</a>`;
    }
}

// ---- dialog ----

const CHECKBOX_CSS = `
input[type=checkbox] {
    appearance: none;
    display: block;
    flex: none;
    box-sizing: border-box;
    width: 17px;
    height: 17px;
    margin: 0;
    border: 2px solid #8f8f9d;
    border-radius: 3px;
    background: #fff;
}

input[type=checkbox]:checked {
    border-color: #0060df;
    background: #0060df;
}

input[type=checkbox]:checked::before {
    content: "";
    display: block;
    height: 100%;
    background: #fff;
    clip-path: polygon(6% 56%, 20% 42%, 40% 62%, 82% 8%, 98% 20%, 42% 92%);
}`;

const CONTROLS = [
    {id: 1, name: 'Deelauto beschikbaar', type: 'zone', on: true},
    {id: 2, name: 'Deelauto zoektijd', type: 'global_traf_modes'},
    {id: 9, name: 'IJtunnel dicht', type: 'road'},
    {id: 10, name: 'Sluit voor vracht', type: 'road'},
    {id: 12, name: 'Basisschool', type: 'zone', on: true},
    {id: 14, name: '1000 banen', type: 'zone', on: true},
    {id: 15, name: '900 Woningen', type: 'zone'},
    {id: 16, name: 'Kosten deelauto', type: 'global_traf_modes'},
    {id: 17, name: 'Plan Zuidas', type: 'zone'},
    {id: 18, name: 'Eenrichtingsverkeer Zuidas Zuid', type: 'road'},
    {id: 22, name: 'Fietsstraat Variant A', type: 'road'},
    {id: 23, name: 'Fietstraat S106 variant B', type: 'road'},
    {id: 24, name: 'Brug 212 Eruit', type: 'road'},
    {id: 25, name: 'Brug 210 Eruit', type: 'road'}
];

const TYPE_ICONS = {zone: 'house', global_traf_modes: 'globe', road: 'carOn'};

class ControlsTable extends HTMLElement {
    constructor() {
        super();
        this.attachShadow({mode: 'open'}).innerHTML = `
<style>
:host {
    display: flex;
    min-height: 0;
    color: var(--ink);
}

.view {
    flex: 1;
    min-width: 0;
    overflow: auto;
    scrollbar-width: none;
    border-radius: 4px 0 0 4px;
}

.track { width: 10px; background: var(--panel); }
.thumb { height: 147px; background: #6a92ff; }

table {
    width: 100%;
    table-layout: fixed;
    border-collapse: collapse;
    line-height: 20px;
}

th, td { padding: 0 0 2px 4px; text-align: left; }
thead { position: sticky; top: 0; z-index: 1; }

thead tr {
    height: 38px;
    background: var(--panel);
    color: #fff;
    text-shadow: 2px 2px 1px #2a2a2a;
}

tbody tr { height: 38px; background: #e5e5e5; }
tbody tr:nth-child(odd) { height: 37px; background: #fff; }
.id { width: 56px; }
.icon { width: 88px; }
.type { width: 206px; }
.delete { width: 49px; }
.edit { width: 30px; }
.state { width: 38px; }
td.state { padding-left: 8px; }

.pick {
    display: flex;
    align-items: center;
    box-sizing: border-box;
    width: 167px;
    height: 26px;
    padding-right: 6px;
    border-radius: 4px;
    background: #445182;
}

select {
    appearance: none;
    flex: 1;
    min-width: 0;
    height: 26px;
    margin-right: -12px;
    padding: 0 12px 0 5px;
    border: 0;
    background: none;
    color: #a7aec4;
    font: inherit;
    font-weight: normal;
}

.pick app-icon { height: 8px; pointer-events: none; }

button {
    display: flex;
    padding: 0;
    border: 0;
    background: none;
    color: inherit;
}

button app-icon { height: 14px; }
td > app-icon { display: flex; }
${CHECKBOX_CSS}
</style>
<div class="view">
<table>
    <thead>
        <tr>
            <th class="id">Id</th>
            <th class="icon"></th>
            <th>Name</th>
            <th class="type">
                <div class="pick">
                    <select aria-label="Type"><option>type</option><option>zone</option><option>road</option></select>
                    <app-icon name="chevron"></app-icon>
                </div>
            </th>
            <th class="delete">Delete</th>
            <th class="edit">Edit</th>
            <th class="state">State</th>
        </tr>
    </thead>
    <tbody></tbody>
</table>
</div>
<div class="track"><div class="thumb"></div></div>`;
    }

    connectedCallback() {
        this.shadowRoot.querySelector('tbody').innerHTML = CONTROLS.map(c => `
<tr>
    <td>${c.id}</td>
    <td><app-icon name="${TYPE_ICONS[c.type]}"></app-icon></td>
    <td>${c.name}</td>
    <td>${c.type}</td>
    <td><button aria-label="Delete ${c.name}"><app-icon name="trash"></app-icon></button></td>
    <td><button aria-label="Edit ${c.name}"><app-icon name="pencil"></app-icon></button></td>
    <td class="state"><input type="checkbox" aria-label="State of ${c.name}"${c.on ? ' checked' : ''}></td>
</tr>`).join('');
    }
}

class FilterTile extends HTMLElement {
    constructor() {
        super();
        this.attachShadow({mode: 'open'});
    }

    connectedCallback() {
        this.shadowRoot.innerHTML = `
<style>
:host { display: block; }

button {
    display: flex;
    flex-direction: column;
    align-items: center;
    gap: 13px;
    width: 100%;
    height: 93px;
    padding: 4px 0 0;
    border: 0;
    border-radius: 6px;
    background: #b6c7f5;
    color: #2e4a97;
    font: bold 13px/16px "Liberation Sans", Arial, sans-serif;
}

app-icon { height: 30px; }
</style>
<button><slot></slot><app-icon name="${this.getAttribute('icon')}"></app-icon></button>`;
    }
}

class VisibilityFilters extends HTMLElement {
    constructor() {
        super();
        this.attachShadow({mode: 'open'}).innerHTML = `
<style>
:host {
    display: block;
    border-radius: 4px;
    background: var(--panel);
    color: #fff;
}

header {
    display: flex;
    align-items: center;
    box-sizing: border-box;
    height: 41px;
    padding: 0 3px 7px 6px;
    font-weight: bold;
    text-shadow: 2px 2px 1px #2a2a2a;
}

header app-icon { height: 15px; margin-right: 7px; }

label {
    display: flex;
    align-items: center;
    gap: 9px;
    margin-left: auto;
}

.tiles {
    display: grid;
    grid-template-columns: repeat(3, 1fr);
    gap: 7px 6px;
    padding: 0 6px;
}
${CHECKBOX_CSS}
</style>
<header>
    <app-icon name="map"></app-icon>
    <span>Map Visibility Filters:</span>
    <label>Show Disabled <input type="checkbox" checked></label>
</header>
<div class="tiles"><slot></slot></div>`;
    }
}

class ControlsDialog extends HTMLElement {
    constructor() {
        super();
        this.attachShadow({mode: 'open'}).innerHTML = `
<style>
:host {
    display: grid;
    grid-template: 42px minmax(0, 1fr) auto / minmax(0, 1fr) 333px;
    column-gap: 7px;
    box-sizing: border-box;
    width: 100%;
    max-width: 1125px;
    padding: 0 7px 6px 6px;
    border-radius: 8px;
    background: var(--modal);
    box-shadow: 0 4px 16px rgba(0, 0, 0, 0.5);
}

header {
    grid-column: 1 / 3;
    display: flex;
    align-items: center;
    justify-content: space-between;
    padding: 0 4px 4px 6px;
    color: #fff;
}

h2 {
    margin: 0;
    font-size: 18px;
    line-height: 24px;
    text-shadow: 1px 1px 1px #222;
}

header button {
    display: flex;
    padding: 0;
    border: 0;
    background: none;
    color: inherit;
}

header app-icon { height: 15px; }
visibility-filters { grid-area: 2 / 2 / 4 / 3; }

footer {
    display: flex;
    justify-content: center;
    gap: 12px;
    padding: 8px 0 1px 12px;
}

footer button {
    height: 35px;
    padding: 0 12px 6px;
    border: 0;
    border-radius: 6px;
    background: var(--panel);
    color: #fff;
    font: bold 14px/20px "Liberation Sans", Arial, sans-serif;
}
</style>
<header><h2><slot name="title"></slot></h2><button aria-label="Close"><app-icon name="xmark"></app-icon></button></header>
<controls-table></controls-table>
<visibility-filters><slot></slot></visibility-filters>
<footer><button>Create New Control</button><button>Apply Changes</button></footer>`;
    }
}

const app = document.createElement('template');
app.innerHTML = `
<style>
:host {
    display: grid;
    grid-template: auto 1fr auto / 1fr auto;
    position: relative;
    height: 100vh;
    box-sizing: border-box;
    padding: 13px 12px 0 13px;
    overflow: hidden;
}

scenario-bar, user-bar, layers-button, map-tools { position: relative; }
scenario-bar { justify-self: start; }
user-bar { justify-self: end; }
layers-button { grid-row: 3; align-self: end; margin-bottom: 8px; }
.corner { position: relative; grid-row: 3; display: grid; justify-items: end; }
map-tools { margin-bottom: 4px; }
map-attribution { margin-right: -12px; }

.overlay {
    position: absolute;
    inset: 0;
    display: flex;
    justify-content: center;
    padding: 139px 24px 135px 25px;
}
</style>
<basemap-view></basemap-view>
<scenario-bar>US-Amsterdam Demo 2020 (+OV)<span slot="active">(2) US NMM Play</span><span slot="reference">(18) US NMM Ref 3</span></scenario-bar>
<user-bar>1</user-bar>
<layers-button>Layers</layers-button>
<div class="corner">
    <map-tools></map-tools>
    <map-attribution></map-attribution>
</div>
<div class="overlay">
    <controls-dialog>
        <span slot="title">Controls</span>
        <filter-tile icon="light">Node</filter-tile>
        <filter-tile icon="house">Zone</filter-tile>
        <filter-tile icon="parking">Parking</filter-tile>
        <filter-tile icon="turn">Turn</filter-tile>
        <filter-tile icon="carOn">Car-Shared</filter-tile>
        <filter-tile icon="car">Road</filter-tile>
        <filter-tile icon="bike">Bike</filter-tile>
        <filter-tile icon="train">Transitline</filter-tile>
        <filter-tile icon="globe">Global</filter-tile>
        <filter-tile icon="truck">Hub</filter-tile>
    </controls-dialog>
</div>`;

class MapApp extends HTMLElement {
    constructor() {
        super();
        this.attachShadow({mode: 'open'}).appendChild(app.content.cloneNode(true));
    }
}

customElements.define("app-icon", AppIcon);
customElements.define("basemap-view", BasemapView);
customElements.define("scenario-bar", ScenarioBar);
customElements.define("user-bar", UserBar);
customElements.define("layers-button", LayersButton);
customElements.define("map-tools", MapTools);
customElements.define("map-attribution", MapAttribution);
customElements.define("controls-table", ControlsTable);
customElements.define("filter-tile", FilterTile);
customElements.define("visibility-filters", VisibilityFilters);
customElements.define("controls-dialog", ControlsDialog);
customElements.define("map-app", MapApp);
</script>
</body>
</html>
